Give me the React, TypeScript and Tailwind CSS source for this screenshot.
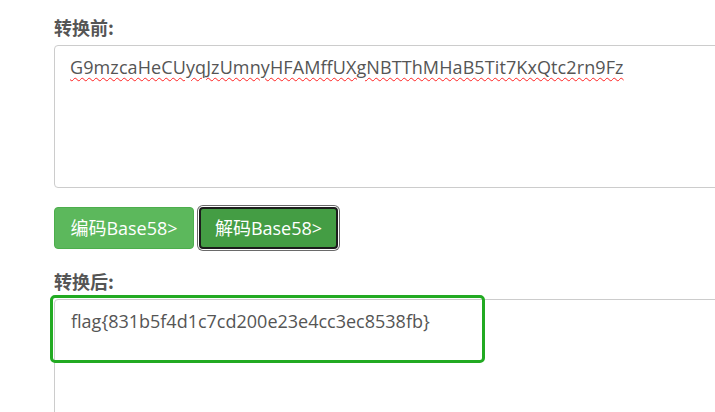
export default function App() {
  const font = { fontFamily: '"Open Sans", "Noto Sans CJK SC", sans-serif' }
  return (
    <div className="w-[715px] h-[412px] overflow-hidden bg-white text-[#555]" style={font}>
      <div className="pl-[54px] pt-[16px] w-[900px]">
        <div className="text-[18px] font-bold leading-[22px] h-[29px] font-['Noto_Sans_CJK_SC',sans-serif]">转换前:</div>
        <div className="h-[143px] border border-[#ccc] rounded-[4px] px-[15px] pt-[8px] text-[18px] tracking-[0.1px] leading-[26px]">
          <span className="underline decoration-wavy decoration-[#f22] decoration-1 underline-offset-[3px]">
            G9mzcaHeCUyqJzUmnyHFAMffUXgNBTThMHaB5Tit7KxQtc2rn9Fz
          </span>
        </div>
        <div className="flex gap-[5px] mt-[19px]">
          <button className="w-[140px] h-[42px] rounded-[4px] bg-[#5cb85c] border border-[#4cae4c] text-white text-[18px]">
            编码Base58&gt;
          </button>
          <button className="w-[139px] h-[42px] rounded-[4px] bg-[#449d44] border-2 border-[#1c1c1c] shadow-[0_0_0_1px_#fff,0_0_0_2px_#6a6a6a] text-white text-[18px]">
            解码Base58&gt;
          </button>
        </div>
        <div className="mt-[21px] text-[18px] font-bold leading-[22px] h-[29px] font-['Noto_Sans_CJK_SC',sans-serif]">转换后:</div>
        <div className="relative h-[160px] border border-[#ccc] rounded-[4px] px-[16px] pt-[8px] text-[18px] leading-[26px]">
          flag{'{'}831b5f4d1c7cd200e23e4cc3ec8538fb{'}'}
          <div className="absolute left-[-5px] top-[-5px] w-[435px] h-[68px] border-[3px] border-[#22aa22] rounded-[5px]" />
        </div>
      </div>
    </div>
  )
}
